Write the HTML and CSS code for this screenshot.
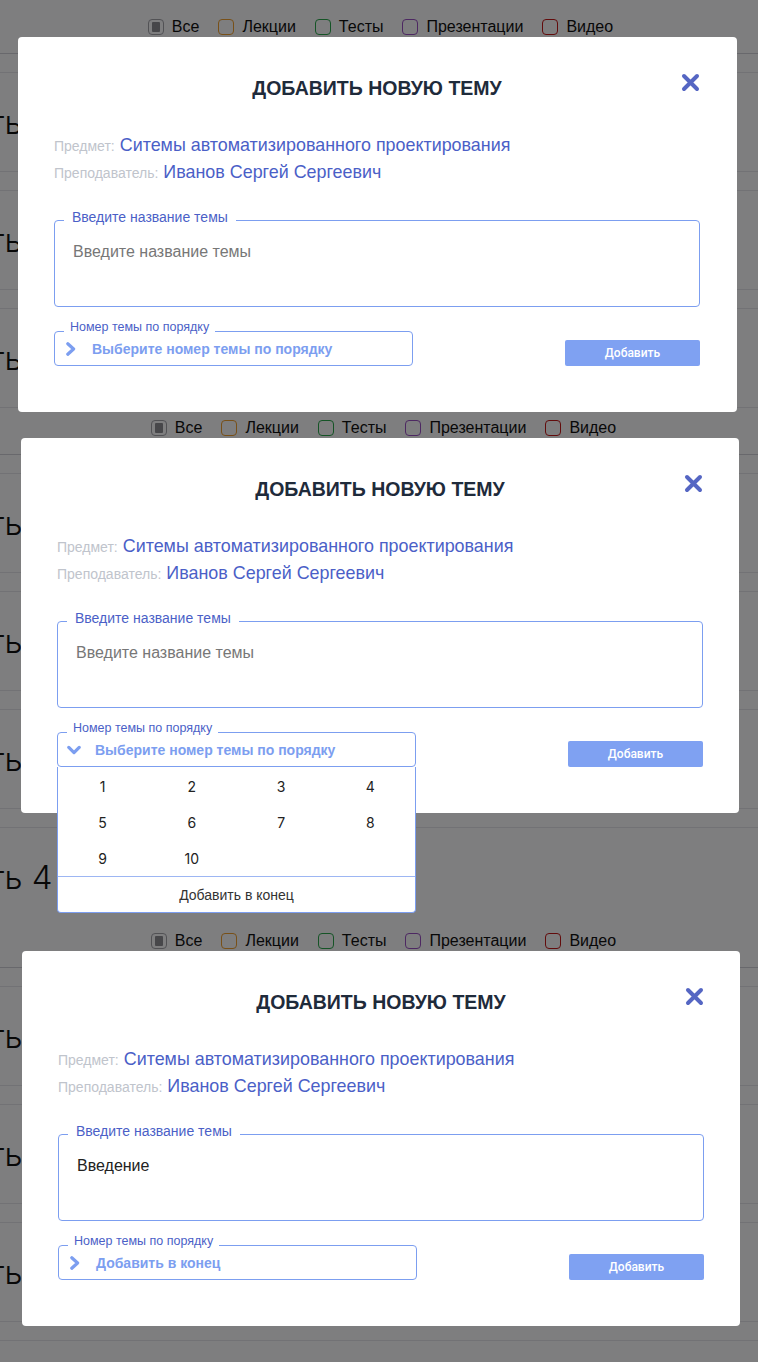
FILE: index.html
```html
<!DOCTYPE html>
<html lang="ru">
<head>
<meta charset="utf-8">
<title>Добавить новую тему</title>
<link rel="stylesheet" href="styles.css">
</head>
<body>

<!-- Screen 1 -->
<section class="screen s1">
  <div class="page">
    <div class="filters">
      <label class="filter"><span class="cb cb-all"></span>Все</label>
      <label class="filter"><span class="cb cb-lec"></span>Лекции</label>
      <label class="filter"><span class="cb cb-test"></span>Тесты</label>
      <label class="filter"><span class="cb cb-pres"></span>Презентации</label>
      <label class="filter"><span class="cb cb-video"></span>Видео</label>
    </div>
    <div class="row"><span class="row-title">Часть 1</span></div>
    <div class="row"><span class="row-title">Часть 2</span></div>
    <div class="row"><span class="row-title">Часть 3</span></div>
    <div class="row"><span class="row-title">Часть 4</span></div>
  </div>
  <div class="overlay">
    <div class="modal">
      <div class="modal-head">
        <h2 class="modal-title">ДОБАВИТЬ НОВУЮ ТЕМУ</h2>
        <button class="close" type="button"><svg viewBox="0 0 19 19" width="19" height="19"><path d="M3 3 L16 16 M16 3 L3 16" stroke="#5566c3" stroke-width="4" stroke-linecap="round" fill="none"/></svg></button>
      </div>
      <div class="info">
        <div class="info-line"><span class="info-key">Предмет:</span> <span class="info-val">Ситемы автоматизированного проектирования</span></div>
        <div class="info-line"><span class="info-key">Преподаватель:</span> <span class="info-val">Иванов Сергей Сергеевич</span></div>
      </div>
      <div class="field field-text">
        <span class="field-label">Введите название темы</span>
        <div class="field-input placeholder">Введите название темы</div>
      </div>
      <div class="form-foot">
        <div class="field field-select">
          <span class="field-label small">Номер темы по порядку</span>
          <svg class="chev" viewBox="0 0 14 14"><path d="M3.8 1.8 L9.6 7 L3.8 12.2" fill="none" stroke="currentColor" stroke-width="3.2" stroke-linecap="round" stroke-linejoin="round"/></svg>
          <span class="select-text">Выберите номер темы по порядку</span>
        </div>
        <button class="btn" type="button">Добавить</button>
      </div>
    </div>
  </div>
</section>

<!-- Screen 2 -->
<section class="screen s2">
  <div class="page">
    <div class="filters">
      <label class="filter"><span class="cb cb-all"></span>Все</label>
      <label class="filter"><span class="cb cb-lec"></span>Лекции</label>
      <label class="filter"><span class="cb cb-test"></span>Тесты</label>
      <label class="filter"><span class="cb cb-pres"></span>Презентации</label>
      <label class="filter"><span class="cb cb-video"></span>Видео</label>
    </div>
    <div class="row"><span class="row-title">Часть 1</span></div>
    <div class="row"><span class="row-title">Часть 2</span></div>
    <div class="row"><span class="row-title">Часть 3</span></div>
    <div class="row"><span class="row-title">Часть 4</span></div>
    <div class="row"><span class="row-title">Часть 5</span></div>
  </div>
  <div class="overlay">
    <div class="modal">
      <div class="modal-head">
        <h2 class="modal-title">ДОБАВИТЬ НОВУЮ ТЕМУ</h2>
        <button class="close" type="button"><svg viewBox="0 0 19 19" width="19" height="19"><path d="M3 3 L16 16 M16 3 L3 16" stroke="#5566c3" stroke-width="4" stroke-linecap="round" fill="none"/></svg></button>
      </div>
      <div class="info">
        <div class="info-line"><span class="info-key">Предмет:</span> <span class="info-val">Ситемы автоматизированного проектирования</span></div>
        <div class="info-line"><span class="info-key">Преподаватель:</span> <span class="info-val">Иванов Сергей Сергеевич</span></div>
      </div>
      <div class="field field-text">
        <span class="field-label">Введите название темы</span>
        <div class="field-input placeholder">Введите название темы</div>
      </div>
      <div class="form-foot">
        <div class="field field-select">
          <span class="field-label small">Номер темы по порядку</span>
          <svg class="chev" viewBox="0 0 14 14"><path d="M1.8 4.4 L7 9.6 L12.2 4.4" fill="none" stroke="currentColor" stroke-width="3.2" stroke-linecap="round" stroke-linejoin="round"/></svg>
          <span class="select-text">Выберите номер темы по порядку</span>
          <div class="dropdown">
            <div class="dd-grid">
              <span>1</span><span>2</span><span>3</span><span>4</span>
              <span>5</span><span>6</span><span>7</span><span>8</span>
              <span>9</span><span>10</span>
            </div>
            <div class="dd-end">Добавить в конец</div>
          </div>
        </div>
        <button class="btn" type="button">Добавить</button>
      </div>
    </div>
  </div>
</section>

<!-- Screen 3 -->
<section class="screen s3">
  <div class="page">
    <div class="filters">
      <label class="filter"><span class="cb cb-all"></span>Все</label>
      <label class="filter"><span class="cb cb-lec"></span>Лекции</label>
      <label class="filter"><span class="cb cb-test"></span>Тесты</label>
      <label class="filter"><span class="cb cb-pres"></span>Презентации</label>
      <label class="filter"><span class="cb cb-video"></span>Видео</label>
    </div>
    <div class="row"><span class="row-title">Часть 1</span></div>
    <div class="row"><span class="row-title">Часть 2</span></div>
    <div class="row"><span class="row-title">Часть 3</span></div>
    <div class="row"><span class="row-title">Часть 4</span></div>
  </div>
  <div class="overlay">
    <div class="modal">
      <div class="modal-head">
        <h2 class="modal-title">ДОБАВИТЬ НОВУЮ ТЕМУ</h2>
        <button class="close" type="button"><svg viewBox="0 0 19 19" width="19" height="19"><path d="M3 3 L16 16 M16 3 L3 16" stroke="#5566c3" stroke-width="4" stroke-linecap="round" fill="none"/></svg></button>
      </div>
      <div class="info">
        <div class="info-line"><span class="info-key">Предмет:</span> <span class="info-val">Ситемы автоматизированного проектирования</span></div>
        <div class="info-line"><span class="info-key">Преподаватель:</span> <span class="info-val">Иванов Сергей Сергеевич</span></div>
      </div>
      <div class="field field-text">
        <span class="field-label">Введите название темы</span>
        <div class="field-input">Введение</div>
      </div>
      <div class="form-foot">
        <div class="field field-select">
          <span class="field-label small">Номер темы по порядку</span>
          <svg class="chev" viewBox="0 0 14 14"><path d="M3.8 1.8 L9.6 7 L3.8 12.2" fill="none" stroke="currentColor" stroke-width="3.2" stroke-linecap="round" stroke-linejoin="round"/></svg>
          <span class="select-text">Добавить в конец</span>
        </div>
        <button class="btn" type="button">Добавить</button>
      </div>
    </div>
  </div>
</section>

</body>
</html>
```

FILE: styles.css
```css
* { box-sizing: border-box; margin: 0; padding: 0; }

body {
  margin: 0;
  width: 758px;
  font-family: "Liberation Sans", Arial, sans-serif;
  background: #7e7e81;
}

.screen {
  position: relative;
  overflow: hidden;
  background: #fcfcff;
}
.s1 { height: 412px; }
.s2 { height: 513px; }
.s3 { height: 437px; }

.s2 .page,
.s3 .page { margin-top: -11px; }

/* background page */
.filters {
  height: 54px;
  border-bottom: 1px solid #d0d0d8;
  display: flex;
  justify-content: center;
  align-items: center;
  gap: 19px;
  padding-left: 3px;
  font-size: 16px;
  color: #111;
}
.s2 .filters,
.s3 .filters { padding-left: 9px; }

.filter {
  display: flex;
  align-items: center;
  gap: 8px;
}
.cb {
  width: 16px;
  height: 16px;
  border: 1px solid;
  border-radius: 4px;
  display: flex;
  align-items: center;
  justify-content: center;
}
.cb-all { border-color: #a4a4aa; }
.cb-all::after {
  content: "";
  width: 8px;
  height: 10px;
  background: #8e8e94;
  border-radius: 1px;
}
.cb-lec { border-color: #f0a030; }
.cb-test { border-color: #2aa84c; }
.cb-pres { border-color: #9a50c4; }
.cb-video { border-color: #c41818; }

.row {
  margin-top: 18px;
  height: 100px;
  border-top: 1px solid #e4e4ea;
  border-bottom: 1px solid #e4e4ea;
  display: flex;
  align-items: center;
}
.row-title {
  margin-left: -70px;
  font-family: Inter, "Noto Sans", sans-serif;
  font-size: 33px;
  font-weight: 300;
  color: #111;
  white-space: nowrap;
}

/* overlay + modal */
.overlay {
  position: absolute;
  inset: 0;
  background: rgba(0, 0, 0, 0.5);
  padding: 37px 0 0 18px;
}
.s2 .overlay { padding: 26px 0 0 21px; }
.s3 .overlay { padding: 26px 0 0 22px; }

.modal {
  position: relative;
  width: 719px;
  background: #fff;
  border-radius: 4px;
  padding: 0 37px 46px 36px;
}
.s2 .modal,
.s3 .modal { width: 718px; padding-right: 36px; }

.modal-head {
  display: grid;
  grid-template-columns: 1fr auto 1fr;
  padding-top: 36px;
}
.modal-title {
  grid-column: 2;
  margin-top: 4px;
  font-size: 19.5px;
  line-height: 22px;
  font-weight: 700;
  color: #1f2b3b;
  white-space: nowrap;
}
.close {
  grid-column: 3;
  justify-self: end;
  align-self: start;
  width: 19px;
  height: 19px;
  border: 0;
  background: none;
  display: block;
}
.close svg { display: block; }

.info { margin-top: 33px; }
.info-line {
  font-size: 18px;
  line-height: 27px;
  white-space: nowrap;
}
.info-key { font-size: 14px; line-height: 1; color: #c0c4cc; }
.info-val { font-size: 17.9px; color: #4b5fc7; }

.field {
  position: relative;
  border: 1px solid #7c9ef0;
  border-radius: 4px;
}
.field-label {
  position: absolute;
  top: -12px;
  left: 9px;
  padding: 0 8px;
  background: #fff;
  color: #4b5fc7;
  font-size: 14px;
  line-height: 16px;
  font-weight: 400;
  white-space: nowrap;
}
.field-label.small {
  font-size: 12.5px;
  line-height: 14px;
  padding: 0 6px;
}

.field-text {
  margin-top: 34px;
  height: 87px;
  padding: 21px 18px 0;
}
.field-input {
  font-size: 16px;
  line-height: 20px;
  color: #222;
}
.field-input.placeholder { color: #777; }

.form-foot {
  margin-top: 24px;
  display: flex;
  justify-content: space-between;
  align-items: flex-end;
}
.field-select {
  width: 359px;
  height: 35px;
  display: flex;
  align-items: center;
  gap: 14px;
  padding-left: 9px;
  color: #7c9ef0;
}
.chev { width: 14px; height: 14px; flex: none; display: block; }
.select-text {
  font-size: 14px;
  font-weight: 700;
  white-space: nowrap;
}

.btn {
  width: 135px;
  height: 26px;
  border: 0;
  border-radius: 2px;
  background: #7fa1f2;
  color: #fff;
  font-family: Roboto, "Liberation Sans", sans-serif;
  font-size: 12px;
  font-weight: 500;
}

/* dropdown */
.dropdown {
  position: absolute;
  top: calc(100% + 1px);
  left: -1px;
  right: -1px;
  z-index: 2;
  background: #fff;
  border: 1px solid #7c9ef0;
  border-top: 0;
  border-radius: 0 0 4px 4px;
}
.dd-grid {
  display: grid;
  grid-template-columns: repeat(4, 1fr);
  padding-top: 1px;
}
.dd-grid span {
  height: 36px;
  display: flex;
  align-items: center;
  justify-content: center;
  font-family: Inter, "Noto Sans", sans-serif;
  font-size: 14px;
  color: #222;
}
.dd-end {
  height: 36px;
  border-top: 1px solid #9db6f3;
  display: flex;
  align-items: center;
  justify-content: center;
  font-size: 14px;
  color: #333;
}
```
